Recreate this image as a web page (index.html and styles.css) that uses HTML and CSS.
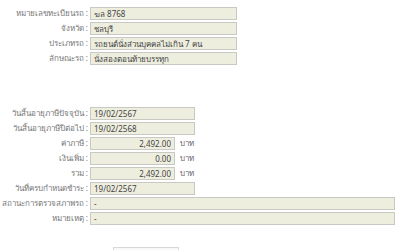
FILE: index.html
```html
<!DOCTYPE html>
<html lang="th">
<head>
    <meta charset="UTF-8">
    <title>ข้อมูลรถ</title>
    <link rel="stylesheet" href="styles.css">
</head>
<body>
  <div class="block">
    <div class="row"><span class="label">หมายเลขทะเบียนรถ :</span><span class="field w-mid">ฆล 8768</span></div>
    <div class="row"><span class="label">จังหวัด :</span><span class="field w-mid">ชลบุรี</span></div>
    <div class="row"><span class="label">ประเภทรถ :</span><span class="field w-mid">รถยนต์นั่งส่วนบุคคลไม่เกิน 7 คน</span></div>
    <div class="row"><span class="label">ลักษณะรถ :</span><span class="field w-mid">นั่งสองตอนท้ายบรรทุก</span></div>
  </div>

  <div class="block second">
    <div class="row"><span class="label">วันสิ้นอายุภาษีปัจจุบัน :</span><span class="field w-date">19/02/2567</span></div>
    <div class="row"><span class="label">วันสิ้นอายุภาษีปีต่อไป :</span><span class="field w-date">19/02/2568</span></div>
    <div class="row"><span class="label">ค่าภาษี :</span><span class="field w-money">2,492.00</span><span class="unit">บาท</span></div>
    <div class="row"><span class="label">เงินเพิ่ม :</span><span class="field w-money">0.00</span><span class="unit">บาท</span></div>
    <div class="row"><span class="label">รวม :</span><span class="field w-money">2,492.00</span><span class="unit">บาท</span></div>
    <div class="row"><span class="label">วันที่ครบกำหนดชำระ :</span><span class="field w-date">19/02/2567</span></div>
    <div class="row"><span class="label">สถานะการตรวจสภาพรถ :</span><span class="field w-wide">-</span></div>
    <div class="row"><span class="label">หมายเหตุ :</span><span class="field w-wide">-</span></div>
  </div>

  <div class="actions">
    <span class="btn"></span>
  </div>
</body>
</html>
```

FILE: styles.css
```css
body {
  margin: 0;
  padding-top: 7px;
  font-family: Tahoma, "Noto Sans", "DejaVu Sans", sans-serif;
  font-size: 8px;
  color: #555;
  background: #fff;
}

.block {
  display: flex;
  flex-direction: column;
  gap: 2px;
}
.second {
  margin-top: 42px;
}

.row {
  display: flex;
  align-items: center;
  height: 13px;
}

.label {
  width: 88px;
  padding-right: 2px;
  text-align: right;
  white-space: nowrap;
  color: #777;
}

.field {
  box-sizing: border-box;
  height: 13px;
  line-height: 11px;
  padding: 0 3px;
  background: #eeeedf;
  border: 1px solid #c9c9c4;
  color: #444;
  white-space: nowrap;
  overflow: hidden;
}
.w-mid { width: 147px; }
.w-date { width: 105px; }
.w-money { width: 85px; text-align: right; }
.w-wide { width: 305px; }

.unit {
  margin-left: 5px;
  color: #666;
}

.actions {
  display: flex;
  padding-left: 113px;
  margin-top: 22px;
}
.btn {
  width: 64px;
  height: 16px;
  border: 1px solid #d8d8d8;
  background: #f8f8f8;
}
```
